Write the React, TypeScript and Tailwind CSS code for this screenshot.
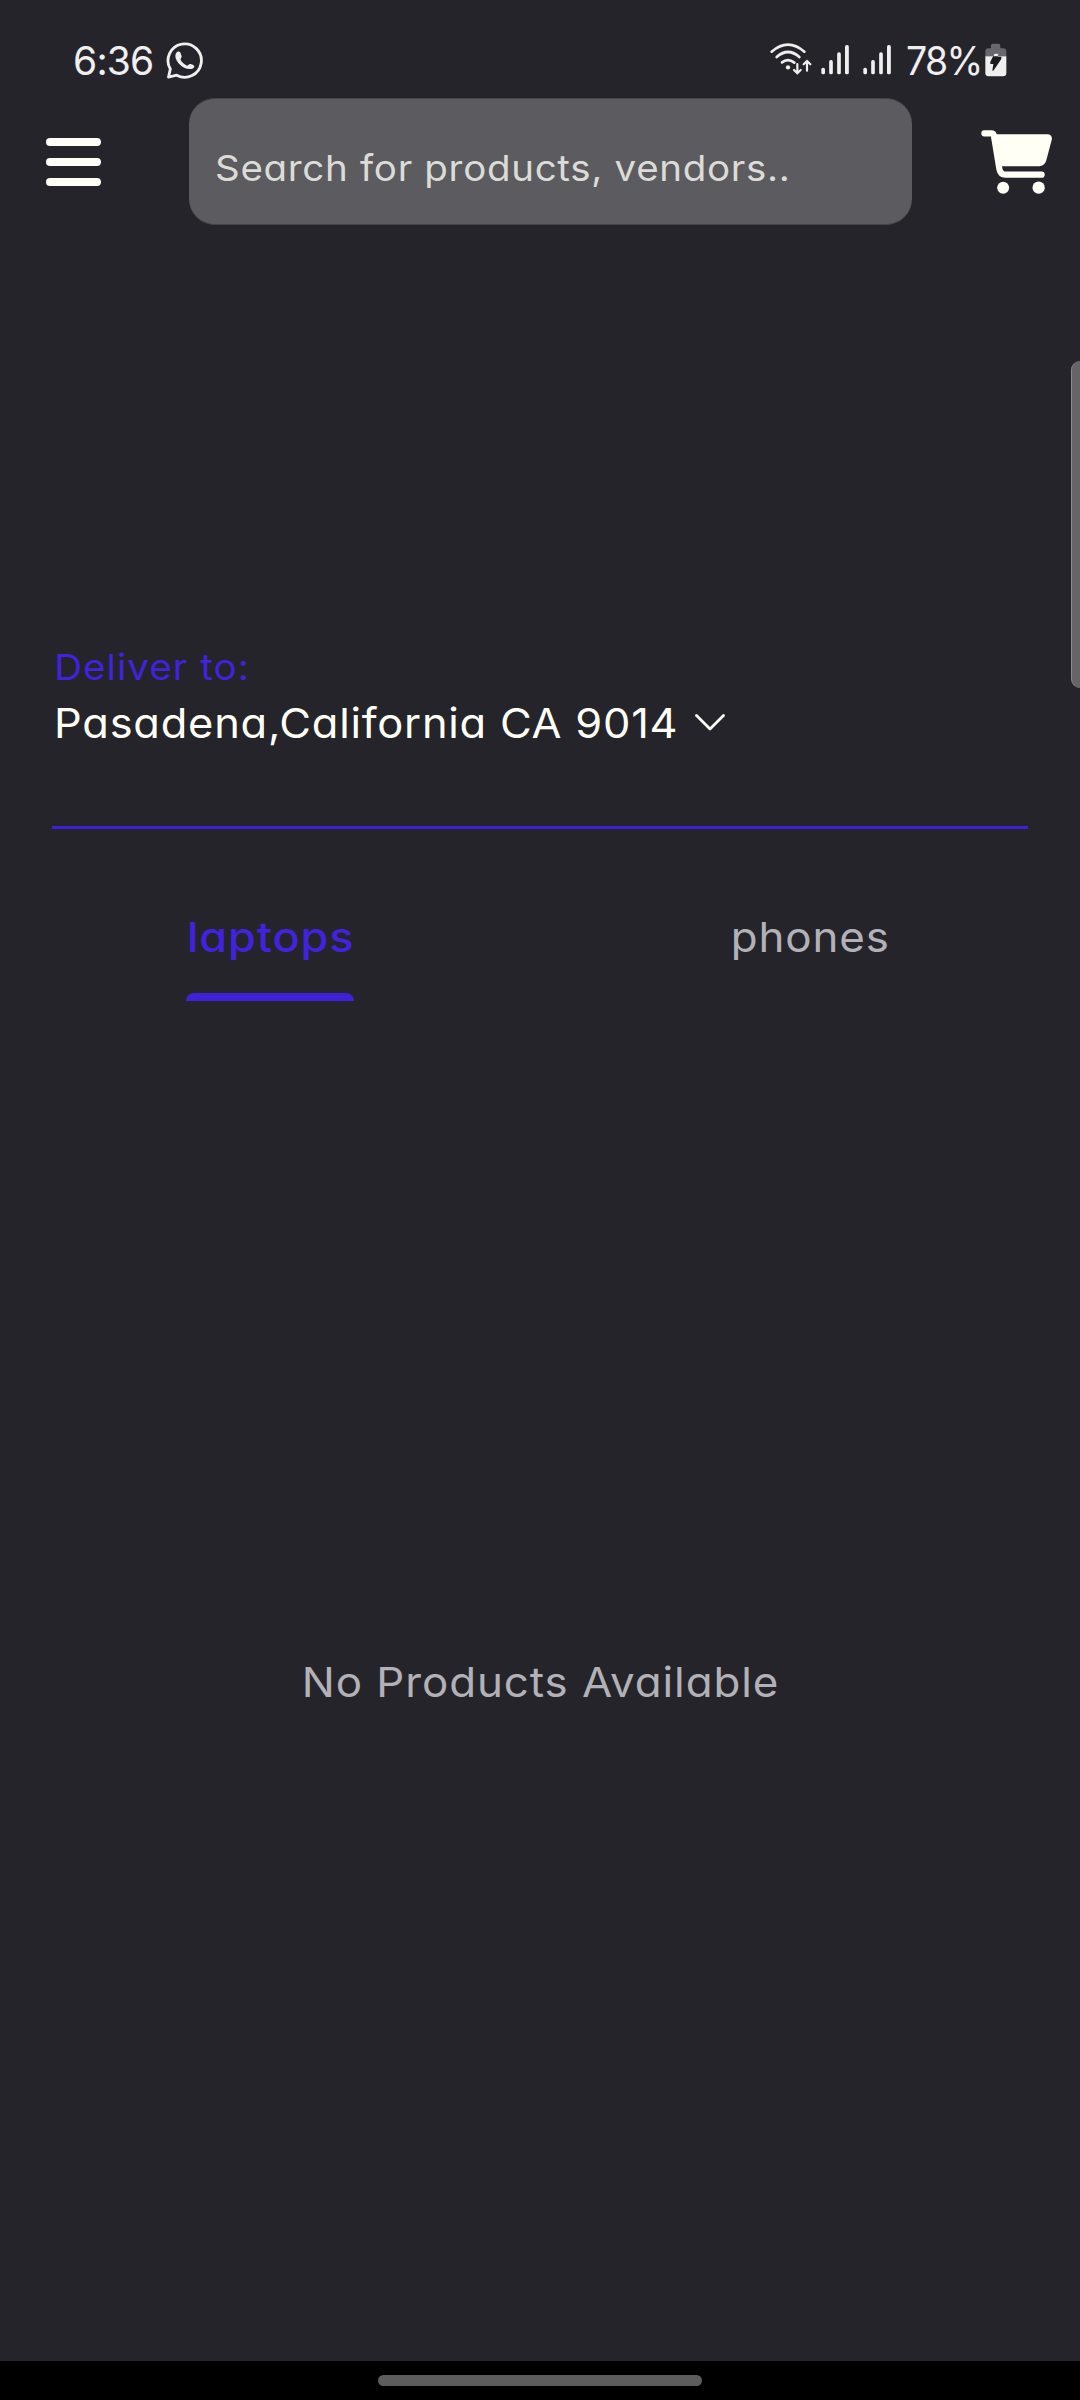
function WhatsAppIcon() {
  return (
    <svg className="h-[38px] w-[38px]" viewBox="496 64 114 114" fill="none">
      <path
        d="M503.500 172.500 L509 148 A50 50 0 1 1 528 166.500 Z"
        stroke="#efefef"
        strokeWidth="8.500"
        strokeLinejoin="round"
      />
      <path
        d="M527 99 C531 94 538 95 540 101 L543 110 C544 114 538 117 540 121 C544 129 551 134 559 138 C562 138 565 131 570 133 L578 136 C583 139 581 145 575 147 C562 150 546 145 535 132 C525 121 521 107 527 99 Z"
        fill="#efefef"
      />
    </svg>
  );
}

function WifiIcon() {
  return (
    <svg className="h-[35px] w-[43px]" viewBox="90 65 129 105" fill="none" stroke="#efefef" strokeWidth="8" strokeLinecap="round">
      <path d="M95 97 Q144 55 193 97" />
      <path d="M110 113 Q144 83 178 113" />
      <path d="M126 129 Q144 115 163 130" />
      <circle cx="144" cy="144" r="6.500" fill="#efefef" stroke="none" />
      <path d="M172 134 V161 M162 152 L172 162 L182 152" strokeWidth="6.500" />
      <path d="M201 154 V125 M191 135 L201 125 L211 135" strokeWidth="6.500" />
    </svg>
  );
}

function SignalIcon() {
  return (
    <svg className="h-[35px] w-[30px]" viewBox="240 65 90 105" fill="#efefef">
      <rect x="244" y="142" width="11" height="20" rx="5" />
      <rect x="267.500" y="119" width="11" height="43" rx="5" />
      <rect x="291.500" y="96" width="11" height="66" rx="5" />
      <rect x="315" y="74" width="11.500" height="88" rx="5" />
    </svg>
  );
}

function BatteryIcon() {
  return (
    <svg className="h-[35px] w-[22px]" viewBox="734 65 66 105">
      <path d="M735 108 V94 Q735 84 745 84 H752 V75 Q752 70 757 70 H775 Q780 70 780 75 V84 H788 Q798 84 798 94 V108 Z" fill="#68676d" />
      <path d="M735 108 H798 V158 Q798 168 788 168 H745 Q735 168 735 158 Z" fill="#efefef" />
      <path d="M762 100 H775 L772 109 H783 V116 L759 151 H756 L759 131 H750 V124 Z" fill="#1b1b1f" />
      <path d="M762 100 H775 L772 108 H759 Z" fill="#efefef" />
    </svg>
  );
}

function CartIcon() {
  return (
    <svg className="h-[66.700px] w-[73.300px]" viewBox="720 325 220 200" fill="#fffff6">
      <path d="M767 343.500 H922 Q936 344 936 358 L919 422 Q914 439 898 439.500 H785 L770 430 L754 352 Z" />
      <path
        d="M733 341 H753 Q761 341 762 349 L778 447 Q781 465 797 465 H905"
        fill="none"
        stroke="#fffff6"
        strokeWidth="18.500"
        strokeLinecap="round"
      />
      <circle cx="789.500" cy="504" r="18" />
      <circle cx="896" cy="504" r="18.500" />
    </svg>
  );
}

function StatusBar() {
  return (
    <div className="flex h-[98px] items-start pl-[73px] pr-[73px] pt-[41px] text-[39px] leading-[40px] text-[#efefef]">
      <span className="w-[93px] whitespace-nowrap tracking-[-0.8px]">6:36</span>
      <WhatsAppIcon />
      <div className="ml-auto flex">
        <WifiIcon />
        <div className="ml-[7px] mt-px flex gap-3">
          <SignalIcon />
          <SignalIcon />
        </div>
        <span className="ml-[14px] w-[79px] origin-left scale-x-[0.96] whitespace-nowrap tracking-[-1.7px]">78%</span>
        <div className="mt-px">
          <BatteryIcon />
        </div>
      </div>
    </div>
  );
}

function Header() {
  return (
    <header className="flex h-[126px] items-start pl-[46px]">
      <button className="mt-10 flex h-[48px] w-[55px] flex-col justify-between" aria-label="Menu">
        <span className="h-2 w-full rounded-full bg-[#fffff6]" />
        <span className="h-2 w-full rounded-full bg-[#fffff6]" />
        <span className="h-2 w-full rounded-full bg-[#fffff6]" />
      </button>
      <div className="ml-[88px] flex h-[127px] w-[723px] items-center rounded-[26px] border-y border-[#45444a] bg-[#5c5b60] pl-[26px] pt-[13px] text-[36px] text-[#dbdcd6]">
        <span className="origin-left scale-x-[1.07] whitespace-nowrap tracking-[0.64px]">Search for products, vendors..</span>
      </div>
      <button className="ml-[68px] mt-[30px] h-[67px]" aria-label="Cart">
        <CartIcon />
      </button>
    </header>
  );
}

function DeliveryAddress() {
  return (
    <section className="mx-[52px] mt-[419px] border-b-[3px] border-[#3d20d6] pb-[73px]">
      <p className="origin-left scale-x-[1.07] whitespace-nowrap text-[36px] leading-[48px] tracking-[1px] text-[#4122dd]">
        <span className="pl-[2px]">Deliver to:</span>
      </p>
      <div className="mt-[2px] flex items-center pl-[2px] text-[41px] leading-[60px] text-[#fffff6]">
        <span className="w-[641px] origin-left scale-x-[1.06] whitespace-nowrap tracking-[0.71px]">Pasadena,California CA 9014</span>
        <svg className="h-[18px] w-[30px]" viewBox="0 0 30 18" fill="none" stroke="#fffff6" strokeWidth="2.800" strokeLinecap="round" strokeLinejoin="round">
          <path d="M1.500 1.500 L15 15 L28.500 1.500" />
        </svg>
      </div>
    </section>
  );
}

function Tabs() {
  return (
    <nav className="mt-[78px] grid grid-cols-2 justify-items-center text-[41px] leading-[60px]">
      <div className="flex w-[168px] flex-col whitespace-nowrap font-medium text-[#4122dd]">
        <span className="origin-left scale-x-110 pl-px tracking-[0.77px]">laptops</span>
        <span className="mt-[26px] h-2 rounded-t-[8px] bg-[#3f21d9]" />
      </div>
      <div className="scale-x-[1.07] tracking-[0.8px] text-[#b2b1b7]">phones</div>
    </nav>
  );
}

export default function App() {
  return (
    <div className="relative flex h-[2400px] w-[1080px] flex-col overflow-hidden bg-[#25242a] font-['Inter',sans-serif] [font-feature-settings:'cv11']">
      <StatusBar />
      <Header />
      <DeliveryAddress />
      <Tabs />
      <p className="mt-[651px] scale-x-[1.07] pl-px text-center text-[41px] leading-[60px] tracking-[0.85px] text-[#b2b1b7]">No Products Available</p>
      <div className="mt-auto flex h-[39px] justify-center bg-black pt-[14px]">
        <span className="h-[11px] w-[324px] rounded-full bg-[#5d5d5d]" />
      </div>
      <div className="absolute right-0 top-[361px] h-[327px] w-[9px] rounded-l-[9px] border-l border-[#89898c] bg-[#656468]" />
    </div>
  );
}
